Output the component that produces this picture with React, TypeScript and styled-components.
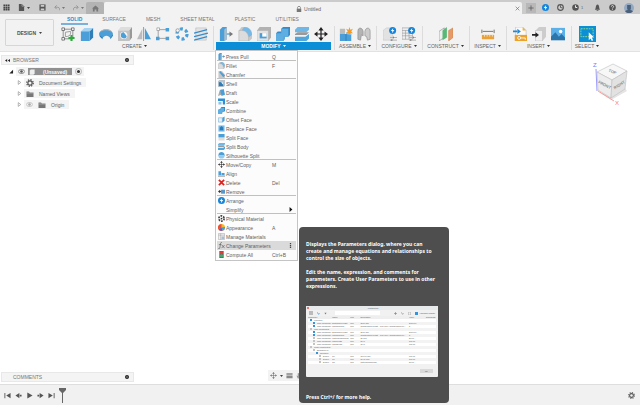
import React from "react";
import styled, { createGlobalStyle, css } from "styled-components";

const blue = "#4a9fd8";
const sky = "#74b9e8";
const ink = "#555";

const GlobalStyle = createGlobalStyle`
  *, *::before, *::after { box-sizing: border-box; }
  body {
    margin: 0;
    background: #fff;
    color: #626262;
    font-family: "Liberation Sans", Arial, sans-serif;
    font-size: 5px;
    line-height: 8px;
  }
  button, input {
    font: inherit;
    color: inherit;
    border: 0;
    margin: 0;
    padding: 0;
    background: none;
  }
  svg { display: block; flex: none; }
  ul { list-style: none; margin: 0; padding: 0; }
`;

const Page = styled.div`
  min-height: 100vh;
  display: flex;
  flex-direction: column;
`;

/* ---------- title bar ---------- */

const TitleBar = styled.header`
  display: flex;
  height: 14px;
  background: #cbcbcb;
`;

const QuickAccess = styled.div`
  display: flex;
  align-items: center;
  width: 86px;
  padding: 1px 2px 0 3px;
  justify-content: space-between;
`;

const IconButton = styled.button`
  display: flex;
  align-items: center;
  justify-content: center;
  gap: 2px;
  height: 10px;
`;

const HomeTab = styled.button`
  display: flex;
  align-items: center;
  justify-content: center;
  width: 18px;
  margin-top: 2px;
  border-radius: 2px 2px 0 0;
  background: #b3b3b3;
`;

const DocumentTab = styled.div`
  flex: 1;
  display: flex;
  align-items: center;
  justify-content: center;
  gap: 2px;
  margin-top: 2px;
  padding-right: 2px;
  border-radius: 2px 2px 0 0;
  background: #f2f2f2;
`;

const DocumentName = styled.div`
  flex: 1;
  display: flex;
  align-items: center;
  justify-content: center;
  gap: 2px;
  padding-top: 1px;
`;

const Account = styled.div`
  display: flex;
  align-items: center;
  justify-content: space-between;
  width: 118px;
  padding: 1px 6px 0 4px;
  font-size: 4px;
`;

const AccountGroup = styled.div`
  display: flex;
  gap: 8px;
`;

const AddTab = styled(IconButton)`
  width: 10px;
  margin-right: -2px;
  background: #b8b8b8;
`;

/* ---------- ribbon ---------- */

const Ribbon = styled.div`
  display: flex;
  background: #f2f2f2;
  border-bottom: 1px solid #e2e2e2;
`;

const WorkspaceButton = styled.button`
  display: flex;
  align-items: center;
  justify-content: center;
  gap: 3px;
  width: 49px;
  height: 27px;
  margin: 5px 3px 0 5px;
  border: 1px solid #d6d6d6;
  border-radius: 1px;
  font-weight: bold;
  color: #505050;
`;

const RibbonMain = styled.div`
  flex: 1;
`;

const TabList = styled.div`
  display: flex;
  gap: 20px;
  height: 11px;
  padding: 1px 0 0 10px;
`;

const RibbonTab = styled.button<{ $active?: boolean }>`
  position: relative;
  height: 8px;
  white-space: nowrap;
  color: #777;
  ${(p) =>
    p.$active &&
    css`
      color: #2f87c8;
      font-weight: bold;
      &::after {
        content: "";
        position: absolute;
        inset: 8px -6px auto;
        height: 2px;
        background: #7bb0da;
      }
    `}
`;

const Groups = styled.div`
  display: flex;
  padding: 1px 0;
`;

const Group = styled.section<{ $width: number }>`
  position: relative;
  width: ${(p) => p.$width}px;
  padding: 0 3px 0 2px;
  border-right: 1px solid #dcdcdc;
  &:last-child { border-right: 0; }
`;

const Tools = styled.div`
  display: flex;
  justify-content: center;
  height: 16px;
`;

const Tool = styled.button<{ $active?: boolean }>`
  display: flex;
  align-items: center;
  justify-content: center;
  width: ${(p) => (p.$active ? 17 : 19)}px;
  height: 16px;
  background: ${(p) => (p.$active ? "#0d8fd6" : "none")};
`;

const GroupLabel = styled.button<{ $open?: boolean }>`
  display: flex;
  align-items: center;
  justify-content: center;
  gap: 2px;
  width: 100%;
  height: 8px;
  white-space: nowrap;
  ${(p) =>
    p.$open &&
    css`
      background: #0c8ed6;
      color: #fff;
      font-weight: bold;
    `}
`;

/* ---------- drop-down menu and tooltip ---------- */

const Menu = styled.ul`
  position: absolute;
  z-index: 2;
  top: 24px;
  left: 1px;
  width: 83px;
  padding: 1px;
  background: #fcfcfc;
  border: 1px solid #c4c4c4;
`;

const MenuEntry = styled.li<{ $divided?: boolean }>`
  position: relative;
  height: 9px;
  ${(p) =>
    p.$divided &&
    css`
      &::after {
        content: "";
        position: absolute;
        inset: auto 0 0;
        height: 1px;
        background: #c0c0c0;
      }
    `}
`;

const MenuButton = styled.button<{ $active?: boolean }>`
  display: grid;
  grid-template-columns: 7px 1fr 24px;
  align-items: center;
  gap: 1px;
  width: 100%;
  height: 9px;
  padding-left: 1px;
  text-align: left;
  white-space: nowrap;
  background: ${(p) => (p.$active ? "#dadada" : "none")};
`;

const MenuName = styled.span`
  grid-column: 2;
`;

const Trailing = styled.span<{ $end?: boolean }>`
  display: flex;
  justify-content: ${(p) => (p.$end ? "flex-end" : "flex-start")};
  padding-right: 3px;
`;

const Tooltip = styled.div`
  position: absolute;
  top: -14px;
  left: 82px;
  width: 150px;
  padding: 14px 11px 2px 7px;
  border-radius: 4px;
  background: #4e4e4e;
  color: #fff;
  font-family: "Noto Sans", "Open Sans", sans-serif;
  font-weight: bold;
  line-height: 7px;
  p { margin: 0 0 7px; white-space: nowrap; }
  p:last-child { margin: 17px 0 0; }
`;

const Dialog = styled.div`
  margin-top: 16px;
  padding-bottom: 4px;
  border-radius: 1px;
  background: #f1f1f1;
  color: #555;
  font-family: "Liberation Sans", Arial, sans-serif;
  font-size: 2px;
  font-weight: normal;
  line-height: 3px;
`;

const DialogTitle = styled.div`
  display: flex;
  align-items: center;
  height: 4px;
  padding: 0 1px;
  background: #e6eaea;
  span { flex: 1; text-align: center; }
`;

const DialogBar = styled.div`
  display: flex;
  align-items: center;
  gap: 4px;
  height: 6px;
  padding: 0 3px;
  input { flex: 1; height: 4px; margin: 0 10px 0 4px; background: #fff; }
  label { display: flex; align-items: center; gap: 1px; }
`;

const Check = styled.input`
  appearance: none;
  && { flex: none; width: 3px; height: 3px; margin: 0; background: #2f95e0; }
`;

const ParameterTable = styled.table`
  width: calc(100% - 4px);
  margin: 0 2px;
  border-collapse: collapse;
  table-layout: fixed;
  background: #fff;
  th, td {
    padding: 0;
    height: 3px;
    text-align: left;
    white-space: nowrap;
  }
  th { background: #eee; font-weight: normal; }
  tbody tr:nth-child(even) { background: #f3f3f3; }
`;

const NameCell = styled.td<{ $level: number }>`
  && { padding-left: ${(p) => 1 + p.$level * 3}px; }
`;

const Marker = styled.i<{ $on?: boolean }>`
  display: inline-block;
  width: 2px;
  height: 2px;
  margin: 0 2px 0 1px;
  vertical-align: middle;
  background: ${(p) => (p.$on ? "#2f95e0" : "#c4c4c4")};
`;

const DialogFooter = styled.div`
  display: flex;
  justify-content: flex-end;
  padding: 5px 5px 0;
  button { width: 13px; height: 4px; background: #dadada; text-align: center; line-height: 4px; }
`;

/* ---------- workspace ---------- */

const Workspace = styled.main`
  flex: 1;
  display: flex;
  justify-content: space-between;
`;

const LeftColumn = styled.div`
  display: flex;
  flex-direction: column;
  justify-content: space-between;
  width: 134px;
  padding: 3px 0 2px 1px;
`;

const PanelHeader = styled.div`
  display: flex;
  align-items: center;
  gap: 3px;
  height: 10px;
  padding: 0 4px 0 3px;
  border: 1px solid #e8e8e8;
  background: #f4f4f4;
  color: #777;
  span { flex: 1; }
`;

const Tree = styled.ul`
  display: flex;
  flex-direction: column;
  gap: 2px;
  padding: 2px 0 0 8px;
`;

const TreeRow = styled.li<{ $child?: boolean }>`
  display: flex;
  align-items: center;
  gap: 2px;
  height: 9px;
  padding-left: ${(p) => (p.$child ? 8 : 0)}px;
  white-space: nowrap;
`;

const TreeBody = styled.div`
  display: flex;
  align-items: center;
  gap: 5px;
  height: 9px;
  padding: 0 5px 0 2px;
  background: #f4f4f4;
`;

const RootBody = styled(TreeBody)`
  gap: 3px;
  padding: 0 2px;
`;

const RootName = styled.div`
  display: flex;
  align-items: center;
  gap: 8px;
  height: 7px;
  padding: 0 5px 0 1px;
  background: #909090;
  color: #fff;
  font-weight: bold;
`;

const NavBar = styled.div`
  align-self: flex-end;
  display: flex;
  align-items: center;
  gap: 3px;
  height: 11px;
  margin: 0 auto 3px 134px;
  padding: 0 2px;
  background: #f2f2f2;
`;

const CubeArea = styled.div`
  padding: 7px 5px 0 0;
`;

const Timeline = styled.footer`
  display: flex;
  align-items: center;
  gap: 4px;
  height: 21px;
  padding: 0 5px 0 4px;
  border-top: 1px solid #dedede;
  background: #f1f1f1;
`;

const Transport = styled.button`
  display: flex;
  align-items: center;
  justify-content: center;
  width: 7px;
  height: 8px;
`;

const Spacer = styled.div`
  flex: 1;
`;

/* ---------- icons ---------- */

type IconProps = { size?: number; children: React.ReactNode };

const Icon = ({ size = 14, children }: IconProps) => (
  <svg width={size} height={size} viewBox="0 0 16 16" fill="none" aria-hidden="true">
    {children}
  </svg>
);

const Caret = ({ color = "#444" }: { color?: string }) => (
  <svg width="3" height="2" viewBox="0 0 6 4" aria-hidden="true">
    <path d="M0 0h6L3 4z" fill={color} />
  </svg>
);

const MoveCross = ({ color = "#333" }: { color?: string }) => (
  <>
    <path d="M8 2v12M2 8h12" stroke={color} strokeWidth="1.4" />
    <path d="M8 0l3 4H5zM8 16l3-4H5zM0 8l4-3v6zM16 8l-4-3v6z" fill={color} />
  </>
);

const Gear = ({ color = "#555" }: { color?: string }) => (
  <>
    <circle cx="8" cy="8" r="6.5" stroke={color} strokeWidth="2.6" strokeDasharray="2.6 2.5" />
    <circle cx="8" cy="8" r="4.3" stroke={color} strokeWidth="2.4" />
  </>
);

const FolderShape = () => (
  <>
    <path d="M1 3h5l2 2h7v9H1z" fill="#777" />
    <path d="M1 6h14" stroke="#ccc" strokeWidth="1" />
  </>
);

const Bolt = () => (
  <>
    <circle cx="8" cy="8" r="8" fill="#1585dc" />
    <path d="M9.5 2L4 9h3.4L6.5 14 12 7H8.6z" fill="#fff" />
  </>
);

const Eye = ({ color = "#555" }: { color?: string }) => (
  <>
    <path d="M0 8c4-6 12-6 16 0-4 6-12 6-16 0z" stroke={color} strokeWidth="1.6" />
    <circle cx="8" cy="8" r="3" fill={color} />
  </>
);

const Extrude = () => (
  <>
    <path d="M1 5l4-4h10l-4 4z" fill="#a5d3f2" />
    <path d="M11 5l4-4v11l-4 4z" fill="#2f7fb8" />
    <path d="M1 5h10v11H1z" fill={blue} />
  </>
);

const createTools: [string, React.ReactNode][] = [
  ["Create Sketch", <>
    <path d="M2.5 2.500h11v11h-11z" stroke="#777" strokeWidth=".9" />
    <path d="M5 11V6l6-1v2c0 3-3 4-6 4z" stroke="#888" strokeWidth=".9" />
    <path d="M1 1h3v3H1zM12 1h3v3h-3zM1 12h3v3H1z" fill="#f2f2f2" stroke="#555" strokeWidth=".8" />
    <path d="M12 9v7M8.500 12.500h7" stroke="#2cab3b" strokeWidth="2.4" />
  </>],
  ["Extrude", <Extrude />],
  ["Revolve", <>
    <path d="M0 8c1-7 15-7 16 0l-3 5c-2-4-7-4-9 0z" fill={blue} />
    <path d="M1 6c3-5 12-5 14 0-4-3-10-3-14 0z" fill="#b5b5b5" />
    <path d="M0 8l4 4v2l-3-3zM16 8l-3 4v2l3-4z" fill="#2f7fb8" />
  </>],
  ["Hole", <>
    <path d="M0 4l3-4h13l-3 4z" fill="#ddd" />
    <path d="M13 4l3-4v12l-3 4z" fill="#999" />
    <path d="M0 4h13v12H0z" fill="#c2c2c2" />
    <circle cx="6.500" cy="9.500" r="4.200" fill="#f5f5f5" />
    <path d="M6.500 6a3.500 3.500 0 1 0 3.500 4.500z" fill={blue} />
  </>],
  ["Mirror", <>
    <path d="M6 2v12H0z" fill="#bbb" />
    <path d="M9 1l7 13H9z" fill={blue} />
    <path d="M7.500 0v16" stroke="#777" strokeWidth=".8" />
  </>],
  ["Pattern", <>
    <path d="M2.500 3h11M2.500 3v10h11" stroke="#999" strokeWidth="1" />
    <path d="M1 1h3v3H1z" fill="#fff" stroke="#888" strokeWidth=".7" />
    <path d="M11 1h4v4h-4zM0 11h4v4H0zM11 11h4v4h-4z" fill={blue} />
  </>],
  ["Circular Pattern", <>
    <circle cx="8" cy="8" r="5.800" stroke={blue} strokeWidth="3.600" strokeDasharray="3.400 2.670" />
    <circle cx="3" cy="4" r="2" fill="#f4f4f4" stroke="#888" strokeWidth=".8" />
  </>],
  ["Thread", <>
    <path d="M2 1h12v14H2z" fill="#e3e3e3" stroke="#bbb" strokeWidth=".7" />
    <path d="M0 7l15-4M0 11l16-4M0 15l15-4" stroke="#358bcc" strokeWidth="1.400" />
  </>],
];

const pressPull = <>
  <path d="M1 3l3-3h5v14l-3 2H1z" fill={blue} />
  <path d="M6 3l3-3v14l-3 2z" fill="#a9bccb" />
  <path d="M9 8h4" stroke={blue} strokeWidth="1.500" />
  <path d="M12 5l4 3-4 3z" fill="#777" />
</>;
const fillet = <>
  <path d="M1 4l3-4h4c5 0 8 4 8 8v5l-3 3H1z" fill="#c7c7c7" />
  <path d="M4 4l3-4c5 0 9 4 9 9l-4 3c0-4-3-8-8-8z" fill={sky} />
  <path d="M1 4h3c5 0 8 4 8 8v4H1z" fill="#dcdcdc" stroke="#aaa" strokeWidth=".5" />
</>;
const shell = <>
  <path d="M0 4l3-4h13v12l-3 4H0z" fill="#b2b2b2" />
  <path d="M0 4h13v12H0z" fill="#e2e2e2" stroke="#aaa" strokeWidth=".5" />
  <path d="M3 7h8v6H3z" fill={blue} />
  <path d="M6 7h5v4H6z" fill="#fff" />
</>;
const combine = <>
  <path d="M0 7l2-2h4V2l2-2h8v9l-2 2h-4v3l-2 2H0z" fill="#348acb" />
  <path d="M0 7h6V2h8v9h-5v5H0z" fill="#5eaee2" />
</>;
const splitBody = <>
  <path d="M0 3l3-3h13v3l-3 3H0z" fill="#70b7e6" />
  <path d="M0 8l3-2h13l-3 3H0z" fill="#999" />
  <path d="M0 11h12l4-3v5l-3 3H0z" fill="#51a6dc" />
</>;

const modifyTools: [string, React.ReactNode][] = [
  ["Press Pull", pressPull],
  ["Fillet", fillet],
  ["Shell", shell],
  ["Combine", combine],
  ["Split Body", splitBody],
  ["Move/Copy", <MoveCross color="#222" />],
];

const assembleTools: [string, React.ReactNode][] = [
  ["New Component", <>
    <path d="M1 2h6v6H1z" fill="#bbb" />
    <path d="M1 8h7v8H1zM8 8h6v8H8z" fill={blue} />
    <path d="M8 8V6l6 1v2z" fill="#8fc8ef" />
    <path d="M8 8v8" stroke="#2f7fb8" />
    <path d="M12 0l1 3 3-1-2 3 2 2-3 0-1 3-1-3-3 0 2-2-2-3 3 1z" fill="#f59b23" />
  </>],
  ["Joint", <>
    <path d="M1 14V5c0-5 5-5 6 0v5l-2-1-1 6z" fill="#b5b5b5" stroke="#888" strokeWidth=".7" />
    <path d="M15 14V5c0-5-5-5-6 0v5l2 1 1 4z" fill="#ccc" stroke="#888" strokeWidth=".7" />
  </>],
];

const configureTools: [string, React.ReactNode][] = [
  ["Configure Design", <>
    <path d="M0 4l4-3h7v14H0z" fill="#e2e2e2" stroke="#c4c4c4" strokeWidth=".6" />
    <g transform="translate(7 0) scale(.5)"><Bolt /></g>
    <path d="M8 12h8M8 15h8" stroke="#aaa" /><path d="M12 11v2M10 14v2" stroke="#777" />
  </>],
  ["Configuration Table", <>
    <path d="M0 1h12v13H0z" fill="#eee" stroke="#999" strokeWidth=".7" />
    <path d="M0 4h12M0 7h12M0 10h12M4 4v10M8 4v10" stroke="#999" strokeWidth=".7" />
    <g transform="translate(7 0) scale(.5)"><Bolt /></g>
    <path d="M8 12h8M8 15h8" stroke="#aaa" /><path d="M13 11v2M10 14v2" stroke="#777" />
  </>],
];

const constructTools: [string, React.ReactNode][] = [
  ["Offset Plane", <>
    <path d="M0 5l6-4v11l-6 4z" fill="#eee" stroke="#888" strokeWidth=".7" />
    <path d="M4 4l5-4v12l-5 3z" fill="#58b976" />
    <path d="M11 4l5-3v11l-5 4z" fill="#e79a65" stroke="#c57a48" strokeWidth=".6" />
  </>],
];

const inspectTools: [string, React.ReactNode][] = [
  ["Measure", <>
    <path d="M1 3v4M15 3v4M2 5h12" stroke="#666" />
    <path d="M1 9h14v5H1z" fill="#e9a23b" />
    <path d="M4 9v2M7 9v2M10 9v2M13 9v2" stroke="#fff" strokeWidth=".7" />
  </>],
];

const insertTools: [string, React.ReactNode][] = [
  ["Insert Derive", <>
    <path d="M3 0h8l4 4v6H3z" fill="#fafafa" stroke="#bbb" strokeWidth=".7" />
    <path d="M11 0l4 4h-4z" fill="#f3b13c" />
    <path d="M2 9h14v7H2z" fill="#eda32a" />
    <circle cx="7" cy="12.500" r="1.700" stroke="#fff" /><path d="M9 12.500h5v2" stroke="#fff" />
    <path d="M0 5h5" stroke="#2389d6" strokeWidth="2" /><path d="M5 2l4 3-4 3z" fill="#2389d6" />
  </>],
  ["Insert Mesh", <>
    <path d="M4 4l4-4h8v11l-4 5H4z" fill="#ccc" />
    <path d="M4 4h8v12H4z" fill="#ededed" stroke="#bbb" strokeWidth=".5" />
    <path d="M0 9h5" stroke="#222" strokeWidth="2" /><path d="M4 6l4 3-4 3z" fill="#222" />
  </>],
  ["Canvas", <>
    <path d="M0 1h16v14H0z" fill="#5bb0e8" />
    <path d="M0 15V11l5-5 4 5 3-3 4 4v3z" fill="#2c75ab" />
    <circle cx="11" cy="5" r="2" fill="#fff" />
  </>],
];

const selectTools: [string, React.ReactNode][] = [
  ["Select", <>
    <path d="M1 2h14v9H1z" stroke="#8fe08a" strokeWidth="1" strokeDasharray="2 1" />
    <path d="M10 6v9l2-2 1.500 3 1.500-1-1.500-3H16z" fill="#fff" />
  </>],
];

const groups = [
  { label: "CREATE", width: 157, tools: createTools },
  { label: "MODIFY", width: 121, tools: modifyTools, open: true },
  { label: "ASSEMBLE", width: 42, tools: assembleTools },
  { label: "CONFIGURE", width: 46, tools: configureTools },
  { label: "CONSTRUCT", width: 47, tools: constructTools },
  { label: "INSPECT", width: 37, tools: inspectTools },
  { label: "INSERT", width: 65, tools: insertTools },
  { label: "SELECT", width: 31, tools: selectTools, active: true },
];

const tabs = ["SOLID", "SURFACE", "MESH", "SHEET METAL", "PLASTIC", "UTILITIES"];

type Entry = {
  name: string;
  icon?: React.ReactNode;
  keys?: string;
  divided?: boolean;
  submenu?: boolean;
  active?: boolean;
};

const entries: Entry[] = [
  { name: "Press Pull", keys: "Q", icon: pressPull, divided: true },
  { name: "Fillet", keys: "F", icon: fillet },
  { name: "Chamfer", divided: true, icon: <>
    <path d="M1 0h8l7 8v8H1z" fill="#c7c7c7" /><path d="M5 0l11 10-4 4L3 3z" fill={blue} />
  </> },
  { name: "Shell", icon: <>
    <path d="M0 3l3-3h13v13l-3 3H0z" fill="#b9c4cc" /><path d="M2 5h10v9H2z" fill="#2b7cb8" /><path d="M7 5h5v6z" fill="#fff" />
  </> },
  { name: "Draft", icon: <>
    <path d="M0 16L4 3l4-3v13z" fill="#aaa" /><path d="M5 3l8-3 3 13-8 3z" fill={blue} />
  </> },
  { name: "Scale", icon: <><path d="M0 1h16v14h-5V7H0z" fill="#2d8fd4" /><path d="M1 9h7v6H1z" fill="#8cc6ee" /></> },
  { name: "Combine", icon: combine },
  { name: "Offset Face", icon: <>
    <path d="M1 4h9v10H1z" fill="#eee" stroke={blue} /><path d="M10 4l5-3v10l-5 4z" fill={blue} />
  </> },
  { name: "Replace Face", icon: <>
    <path d="M1 1h14v14H1z" fill={sky} /><path d="M4 6l4-4 4 4v6H4z" fill="#2b7cb8" />
  </> },
  { name: "Split Face", icon: <><path d="M1 0h14v8H1z" fill={blue} /><path d="M1 9h14v6H1z" fill="#ddd" /></> },
  { name: "Split Body", icon: splitBody },
  { name: "Silhouette Split", divided: true, icon: <>
    <path d="M1 7c0-9 14-9 14 0z" fill={blue} /><path d="M1 9h14c0 8-14 8-14 0z" fill="#93c9ee" />
    <path d="M0 8h16" stroke="#777" />
  </> },
  { name: "Move/Copy", keys: "M", icon: <MoveCross /> },
  { name: "Align", icon: <><path d="M1 3h6v9H1zM8 7h7v5H8z" fill={blue} /><path d="M0 14h16" stroke="#888" strokeWidth="2" /></> },
  { name: "Delete", keys: "Del", icon: <path d="M2 2l12 12M14 2L2 14" stroke="#e0201c" strokeWidth="4" /> },
  { name: "Remove", divided: true, icon: <>
    <path d="M0 8l5-4v8z" fill="#333" /><path d="M4 8h4" stroke="#333" strokeWidth="2" />
    <path d="M7 4h9v9H7z" fill="#5a97c8" />
  </> },
  { name: "Arrange", icon: <Bolt /> },
  { name: "Simplify", submenu: true, divided: true },
  { name: "Physical Material", icon: <>
    <circle cx="8" cy="8" r="6" stroke="#444" strokeWidth="4" strokeDasharray="4 2.300" /><circle cx="8" cy="8" r="2" fill="#333" />
  </> },
  { name: "Appearance", keys: "A", icon: <>
    <circle cx="8" cy="8" r="8" fill="#f3b52e" /><path d="M8 8L8 0A8 8 0 0 0 1 12z" fill="#e8503a" />
    <path d="M8 8L1 12a8 8 0 0 0 10 3z" fill="#7b51b8" /><path d="M8 8l3 7a8 8 0 0 0 5-8z" fill="#3c9de0" />
  </> },
  { name: "Manage Materials", icon: <>
    <path d="M1 1h14v14H1z" fill="#eee" stroke="#999" /><path d="M1 5h14M6 1v14" stroke="#999" /><path d="M8 8h6v6H8z" fill="#a6bdd4" />
  </> },
  { name: "Change Parameters", active: true, icon: <>
    <path d="M9 1C5 0 6 5 4 14c-1 2-2 2-4 1M2 6h6" stroke="#555" strokeWidth="1.500" />
    <path d="M9 7l6 7M15 7l-7 7" stroke="#555" strokeWidth="1.500" />
  </> },
  { name: "Compute All", keys: "Ctrl+B", icon: <>
    <path d="M3 0h10v16H3z" fill="#666" /><circle cx="8" cy="4" r="3.500" fill="#e83a35" /><circle cx="8" cy="11" r="3.500" fill="#39b36b" />
  </> },
];

type Row = { name: string; level: number; on?: boolean; cells?: [string, string, string, string] };

const equation = "NumberShelfHeight - (100 mm * NumberShelfHei...";
const parameterRows: Row[] = [
  { name: "Favorites", level: 0, on: true },
  { name: "User Parameter", level: 1, on: true, cells: ["BookShelfHeight", "mm", "2000 mm", "2000.00"] },
  { name: "User Parameter", level: 1, on: true, cells: ["ShelfSpacing", "mm", equation, "5"] },
  { name: "User Parameters", level: 0 },
  { name: "User Parameter", level: 1, on: true, cells: ["BookShelfHeight", "mm", "2000 mm", "2000.00"] },
  { name: "User Parameter", level: 1, on: true, cells: ["ShelfSpacing", "mm", equation, "5"] },
  { name: "User Parameter", level: 1, cells: ["MaterialThickness", "mm", "20 mm", "20.00"] },
  { name: "User Parameter", level: 1, cells: ["ShelfWidth", "mm", "80 in", "500.00"] },
  { name: "User Parameter", level: 1, cells: ["ShelfDepth", "mm", "30 in", "300.00"] },
  { name: "Model Parameters", level: 0 },
  { name: "Bookshelf v1", level: 1 },
  { name: "Sketches", level: 2, on: true },
  { name: "Dimen...", level: 3, cells: ["d6", "mm", "300.00 mm", "300.00"] },
  { name: "Dimen...", level: 3, cells: ["d7", "mm", "80.00 mm", "800.00"] },
  { name: "Dimen...", level: 3, cells: ["d8", "mm", "MaterialThickness", "20.00"] },
];

function ParametersTooltip() {
  return (
    <Tooltip role="tooltip">
      <p>Displays the Parameters dialog, where you can<br />create and manage equations and relationships to<br />control the size of objects.</p>
      <p>Edit the name, expression, and comments for<br />parameters. Create User Parameters to use in other<br />expressions.</p>
      <Dialog>
        <DialogTitle>
          <Icon size={2}><circle cx="8" cy="8" r="8" fill="#ee4c45" /></Icon>
          <span>Parameters</span>
        </DialogTitle>
        <DialogBar>
          <Icon size={4}><path d="M0 0h16v16H0z" fill="#bbb" /></Icon>
          <Icon size={3}><path d="M2 2l6 10 6-4" stroke="#2f95e0" strokeWidth="4" /></Icon>
          <Icon size={3}><path d="M2 4h12l-6 9z" fill="#777" /></Icon>
          <input aria-label="Filter parameters" />
          <Icon size={3}><path d="M8 0v16M0 8h16" stroke="#777" strokeWidth="3" /></Icon>
          <Icon size={3}><path d="M2 2l6 10 6-4" stroke="#777" strokeWidth="3" /></Icon>
          <Icon size={3}><path d="M2 0h12v16H2z" stroke="#aaa" strokeWidth="3" /></Icon>
          <label><Check type="checkbox" defaultChecked />Automatic Update</label>
        </DialogBar>
        <ParameterTable>
          <colgroup>
            <col width="19%" /><col width="14%" /><col width="8%" /><col width="38%" /><col width="13%" /><col />
          </colgroup>
          <thead>
            <tr><th>Parameter</th><th>Name</th><th>Unit</th><th>Expression</th><th>Value</th><th>Comments</th></tr>
          </thead>
          <tbody>
            {parameterRows.map((row, i) => (
              <tr key={i}>
                <NameCell $level={row.level}><Marker $on={row.on} />{row.name}</NameCell>
                {(row.cells ?? ["", "", "", ""]).map((c, j) => <td key={j}>{c}</td>)}
                <td />
              </tr>
            ))}
          </tbody>
        </ParameterTable>
        <DialogFooter><button>OK</button></DialogFooter>
      </Dialog>
      <p>Press Ctrl+/ for more help.</p>
    </Tooltip>
  );
}

function ModifyMenu() {
  return (
    <Menu>
      {entries.map((e) => (
        <MenuEntry key={e.name} $divided={e.divided}>
          <MenuButton $active={e.active}>
            {e.icon && <Icon size={7}>{e.icon}</Icon>}
            <MenuName>{e.name}</MenuName>
            <Trailing $end={e.submenu || e.active}>
              {e.keys}
              {e.submenu && <Icon size={5}><path d="M5 0l9 8-9 8z" fill="#111" /></Icon>}
              {e.active && <Icon size={5}><path d="M6 0h4v4H6zM6 6h4v4H6zM6 12h4v4H6z" fill="#444" /></Icon>}
            </Trailing>
          </MenuButton>
          {e.active && <ParametersTooltip />}
        </MenuEntry>
      ))}
    </Menu>
  );
}

const transports: [string, string][] = [
  ["Go to start", "M1 2h2v12H1zM15 2v12L5 8z"],
  ["Step back", "M10 2v12L1 8zM11 6h4v4h-4z"],
  ["Play", "M3 1l12 7-12 7z"],
  ["Step forward", "M6 2v12l9-6zM1 6h4v4H1z"],
  ["Go to end", "M13 2h2v12h-2zM1 2v12l10-6z"],
];

const ViewCube = () => (
  <svg width="48" height="50" viewBox="0 0 48 50" role="img" aria-label="View cube">
    <path d="M12 33l12 8 16-9-2-3-14 8z" fill="#e4e4e4" />
    <path d="M9 10l1 22" stroke="#9a9aff" />
    <path d="M11 32l16 10" stroke="#ff9a9a" />
    <path d="M10 13l16-8 14 7-15 9z" fill="#f7f7f7" stroke="#bdbdbd" strokeWidth=".6" />
    <path d="M10 13l15 8-1 18-13-8z" fill="#ededed" stroke="#bdbdbd" strokeWidth=".6" />
    <path d="M25 21l15-9-2 18-14 9z" fill="#e2e2e2" stroke="#bdbdbd" strokeWidth=".6" />
    <g fontSize="4" fontWeight="bold" fill="#8a8a8a" textAnchor="middle">
      <text transform="translate(25 14) rotate(20)">TOP</text>
      <text transform="translate(17 27) rotate(28)">FRONT</text>
      <text transform="translate(33 27) rotate(-33)">RIGHT</text>
    </g>
    <text x="6" y="8" fontSize="6" fill="#7c7cf5">Z</text>
    <text x="28" y="46" fontSize="6" fill="#f57c7c">X</text>
  </svg>
);

const Dot = () => (
  <Icon size={4}><circle cx="8" cy="8" r="8" fill="#222" /><path d="M4 8h8" stroke="#fff" strokeWidth="2" /></Icon>
);

const treeItems = [
  { name: "Document Settings", icon: <Gear /> },
  { name: "Named Views", icon: <FolderShape /> },
  { name: "Origin", icon: <FolderShape />, hidden: true },
];

export default function App() {
  return (
    <Page>
      <GlobalStyle />
      <TitleBar>
        <QuickAccess>
          <IconButton aria-label="Data panel"><Icon size={7}>
            <path d="M1 1h4v4H1zM6 1h4v4H6zM11 1h4v4h-4zM1 6h4v4H1zM6 6h4v4H6zM11 6h4v4h-4zM1 11h4v4H1zM6 11h4v4H6zM11 11h4v4h-4z" fill="#444" />
          </Icon></IconButton>
          <IconButton aria-label="File"><Icon size={7}><path d="M2 0h7l5 5v11H2z" fill={ink} /><path d="M9 0v5h5" stroke="#ddd" /></Icon><Caret /></IconButton>
          <IconButton aria-label="Save"><Icon size={7}><path d="M1 1h14v14H1z" fill={ink} /><path d="M4 2h8v4H4zM4 10h8v4H4z" fill="#ccc" /></Icon></IconButton>
          <IconButton aria-label="Undo"><Icon size={6}><path d="M3 6h7c5 0 5 6 5 8M7 1L2 6l5 5" stroke="#888" strokeWidth="2" /></Icon><Caret color="#777" /></IconButton>
          <IconButton aria-label="Redo"><Icon size={6}><path d="M13 6H6c-5 0-5 6-5 8M9 1l5 5-5 5" stroke="#888" strokeWidth="2" /></Icon><Caret color="#777" /></IconButton>
        </QuickAccess>
        <HomeTab aria-label="Home"><Icon size={7}><path d="M0 8l8-7 8 7h-2v7h-4v-5H6v5H2V8z" fill="#777" /></Icon></HomeTab>
        <DocumentTab>
          <DocumentName>
            <Icon size={6}><path d="M2 7h12v9H2z" fill="#777" /><path d="M4 7V4c0-4 8-4 8 0v3" stroke="#777" strokeWidth="2" /></Icon>
            Untitled
          </DocumentName>
          <IconButton aria-label="Close tab"><Icon size={5}><path d="M2 2l12 12M14 2L2 14" stroke="#666" strokeWidth="2" /></Icon></IconButton>
        </DocumentTab>
        <Account>
          <AccountGroup>
            <AddTab aria-label="New tab"><Icon size={6}><path d="M8 1v14M1 8h14" stroke="#555" strokeWidth="2" /></Icon></AddTab>
            <IconButton aria-label="Extensions"><Icon size={7}><Bolt /></Icon></IconButton>
            <IconButton aria-label="Updates"><Icon size={7}><circle cx="8" cy="8" r="6.500" stroke={ink} strokeWidth="2.500" /><path d="M8 3v5l5 1" stroke={ink} strokeWidth="2" /></Icon></IconButton>
            <IconButton aria-label="Jobs"><Icon size={7}><circle cx="8" cy="8" r="7.500" fill={ink} /><path d="M8 3v5h4" stroke="#fff" strokeWidth="2" /></Icon>1</IconButton>
          </AccountGroup>
          <AccountGroup>
            <IconButton aria-label="Notifications"><Icon size={7}><path d="M2 13c3-3 1-11 6-12 5 1 3 9 6 12zM6 14h4v2H6z" fill={ink} /></Icon></IconButton>
            <IconButton aria-label="Help"><Icon size={7}><circle cx="8" cy="8" r="7.500" fill={ink} /><path d="M5.500 6c0-4 5-3 5 0 0 2-2.500 2-2.500 4M8 11v2" stroke="#fff" strokeWidth="1.600" /></Icon></IconButton>
            <IconButton aria-label="Account"><Icon size={10}><circle cx="8" cy="8" r="8" fill="#93a9c2" /><path d="M5 3h6v6l-1 2c3 0 4 2 4 3-3 3-9 3-12 0 0-1 1-3 4-3L5 9z" fill="#4a5f7a" /></Icon></IconButton>
          </AccountGroup>
        </Account>
      </TitleBar>

      <Ribbon>
        <WorkspaceButton>DESIGN <Caret /></WorkspaceButton>
        <RibbonMain>
          <TabList role="tablist">
            {tabs.map((t, i) => (
              <RibbonTab key={t} role="tab" aria-selected={i === 0} $active={i === 0}>{t}</RibbonTab>
            ))}
          </TabList>
          <Groups>
            {groups.map((g) => (
              <Group key={g.label} $width={g.width}>
                <Tools>
                  {g.tools.map(([name, art]) => (
                    <Tool key={name} aria-label={name} $active={g.active}><Icon>{art}</Icon></Tool>
                  ))}
                </Tools>
                <GroupLabel $open={g.open} aria-expanded={!!g.open}>
                  {g.label}
                  <Caret color={g.open ? "#fff" : "#333"} />
                </GroupLabel>
                {g.open && <ModifyMenu />}
              </Group>
            ))}
          </Groups>
        </RibbonMain>
      </Ribbon>

      <Workspace>
        <LeftColumn>
          <div>
            <PanelHeader>
              <Icon size={5}><path d="M7 3v10L0 8zM16 3v10L9 8z" fill="#222" /></Icon>
              <span>BROWSER</span>
              <Dot />
            </PanelHeader>
            <Tree>
              <TreeRow>
                <Icon size={5}><path d="M13 2v12H1z" fill="#222" /></Icon>
                <RootBody>
                  <Icon size={7}><Eye /></Icon>
                  <RootName>
                    <Icon size={6}><path d="M2 4l3-3h10v10l-3 4H2z" fill="#eee" /></Icon>
                    (Unsaved)
                  </RootName>
                  <Icon size={7}><circle cx="8" cy="8" r="7" stroke="#999" strokeWidth="1.500" /><circle cx="8" cy="8" r="3.500" fill="#333" /></Icon>
                </RootBody>
              </TreeRow>
              {treeItems.map((item) => (
                <TreeRow key={item.name} $child>
                  <Icon size={5}><path d="M4 2l8 6-8 6z" stroke="#888" strokeWidth="2" /></Icon>
                  <TreeBody>
                    {item.hidden && <Icon size={7}><Eye color="#aaa" /></Icon>}
                    <Icon size={8}>{item.icon}</Icon>
                    {item.name}
                  </TreeBody>
                </TreeRow>
              ))}
            </Tree>
          </div>
          <PanelHeader>
            <Icon size={5}>{null}</Icon>
            <span>COMMENTS</span>
            <Dot />
          </PanelHeader>
        </LeftColumn>
        <NavBar>
          <Icon size={7}><MoveCross color="#777" /></Icon>
          <Caret />
          <Icon size={7}><path d="M1 3h14v3H1zM1 8h14v6H1z" fill="#888" /></Icon>
          <Icon size={7}><path d="M4 15L1 8l3 1V3h2v5-6h2v6-5h2v5l3-3-2 10z" fill="#999" /></Icon>
        </NavBar>
        <CubeArea><ViewCube /></CubeArea>
      </Workspace>

      <Timeline>
        {transports.map(([name, d]) => (
          <Transport key={name} aria-label={name}><Icon size={7}><path d={d} fill="#555" /></Icon></Transport>
        ))}
        <svg width="7" height="15" viewBox="0 0 7 15" aria-hidden="true">
          <path d="M0 0h7v2L4 5v10H3V5L0 2z" fill="#666" />
        </svg>
        <Spacer />
        <Transport aria-label="Timeline settings"><Icon size={7}><Gear /></Icon></Transport>
      </Timeline>
    </Page>
  );
}
